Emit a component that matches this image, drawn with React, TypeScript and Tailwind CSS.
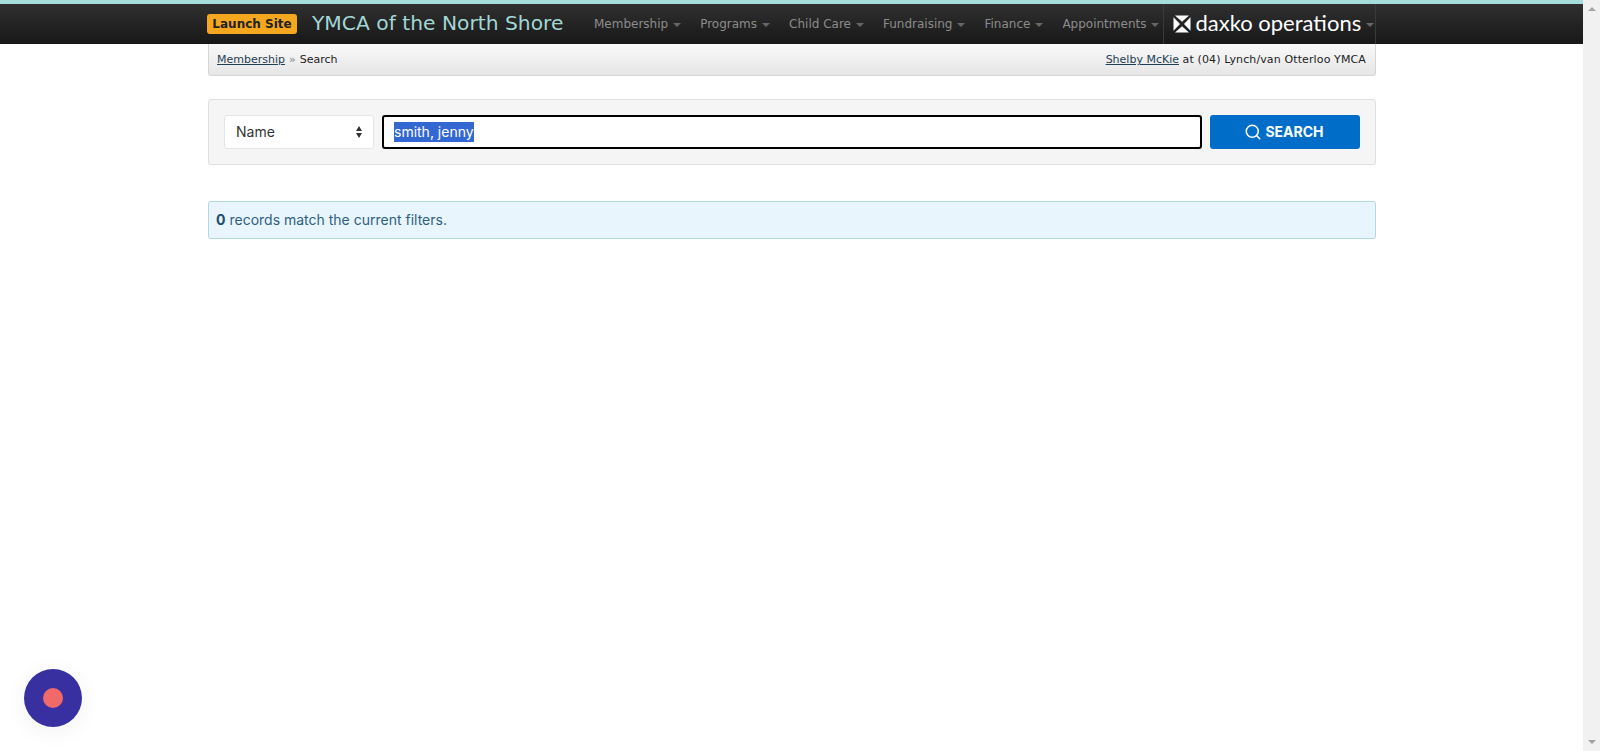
import { Search } from "lucide-react";

const navItems = ["Membership", "Programs", "Child Care", "Fundraising", "Finance", "Appointments"];

function Caret() {
  return <span className="ml-[5px] mt-[2px] h-0 w-0 border-x-[4px] border-t-[4px] border-x-transparent border-t-[#666666]" />;
}

function DaxkoMark() {
  return (
    <svg width="18" height="18" viewBox="0 0 18 18" className="shrink-0">
      <path fill="#fff" d="M2 .5h14L9 6.8zM.5 2.2 7 9 .5 15.8zM17.5 2.2V15.8L11 9zM2 17.5 9 11.2 16 17.5z" />
    </svg>
  );
}

export default function App() {
  return (
    <div className="flex h-[751px] w-full overflow-hidden bg-white font-['Inter',sans-serif]">
      <div className="min-w-0 flex-1">
        <div className="h-[4px] bg-[#a5dcdc]" />
        <header className="h-[40px] bg-gradient-to-b from-[#303030] to-[#181818] font-['DejaVu_Sans',sans-serif]">
          <div className="ml-[207px] flex h-full w-[1169px] items-center">
            <a className="flex h-[20px] w-[90px] items-center justify-center rounded-[3px] bg-[#f5a81f] pb-[1px] text-[12px] font-bold text-[#222222]">
              Launch Site
            </a>
            <span className="ml-[15px] w-[282px] shrink-0 whitespace-nowrap pb-[2px] text-[20.25px] leading-none text-[#a2d8d4]">YMCA of the North Shore</span>
            <nav className="flex h-full items-center">
              {navItems.map((item) => (
                <a key={item} className="flex items-center pr-[19px] text-[12px] text-[#8c8c8c] last:pr-[4px]">
                  {item}
                  <Caret />
                </a>
              ))}
            </nav>
            <div className="flex h-full flex-1 items-center border-x border-[#3a3a3a] pl-[9px]">
              <DaxkoMark />
              <span className="ml-[4px] whitespace-nowrap pb-[2px] font-['Lato',sans-serif] text-[22px] font-normal leading-none text-white">daxko operations</span>
              <span className="flex">
                <Caret />
              </span>
            </div>
          </div>
        </header>

        <main className="ml-[208px] w-[1168px]">
          <div className="flex h-[32px] items-center justify-between rounded-b-[3px] border-x border-b border-[#d6d6d6] bg-gradient-to-b from-[#f9f9f9] to-[#e6e6e6] px-[8px] pr-[9px] pt-[2px] font-['DejaVu_Sans',sans-serif] text-[11px] text-[#222222]">
            <div className="flex items-center">
              <a className="text-[#1f3f55] underline">Membership</a>
              <span className="mx-[4px] text-[#888888]">»</span>
              <span>Search</span>
            </div>
            <div>
              <a className="text-[#1f3f55] underline">Shelby McKie</a>
              <span className="tracking-[0.12px]"> at (04) Lynch/van Otterloo YMCA</span>
            </div>
          </div>

          <section className="mt-[23px] flex h-[66px] items-center gap-[8px] rounded-[3px] border border-[#e0e0e0] bg-[#f5f5f5] px-[15px]">
            <div className="flex h-[34px] w-[150px] items-center justify-between rounded-[3px] border border-[#e6e6e6] bg-white pb-[1px] pl-[11px] pr-[11px] text-[14px] text-[#333333]">
              Name
              <span className="flex flex-col gap-[2px]">
                <span className="h-0 w-0 border-x-[3.5px] border-b-[5px] border-x-transparent border-b-[#333333]" />
                <span className="h-0 w-0 border-x-[3.5px] border-t-[5px] border-x-transparent border-t-[#333333]" />
              </span>
            </div>
            <div className="flex h-[34px] flex-1 items-center rounded-[3px] border-2 border-black bg-white px-[10px] pb-[1px] text-[14px]">
              <span className="bg-[#3367d1] leading-[20px] text-white">smith, jenny</span>
            </div>
            <button className="flex h-[34px] w-[150px] items-center justify-center gap-[3px] rounded-[3px] bg-[#006ec8] pb-[1px] pr-[2px] text-[14px] font-bold text-white">
              <Search size={18} strokeWidth={2} />
              SEARCH
            </button>
          </section>

          <div className="mt-[36px] flex h-[38px] items-center rounded-[3px] border border-[#b2d7e8] bg-[#e8f5fd] px-[7px] pb-[1px] text-[14px] text-[#2f5f7f]">
            <strong className="mr-[4px] font-bold text-[#1f4f6f]">0</strong> records match the current filters.
          </div>
        </main>
      </div>

      <aside className="flex w-[17px] shrink-0 flex-col items-center justify-between bg-[#f1f1f1] py-[7px]">
        <span className="h-0 w-0 border-x-[4px] border-b-[4px] border-x-transparent border-b-[#a3a3a3]" />
        <span className="h-0 w-0 border-x-[4px] border-t-[4px] border-x-transparent border-t-[#a3a3a3]" />
      </aside>

      <button className="fixed bottom-[24px] left-[24px] flex h-[58px] w-[58px] items-center justify-center rounded-full bg-[#3830a0] shadow-[0_4px_24px_rgba(0,0,0,0.06)]">
        <span className="h-[20px] w-[20px] rounded-full bg-[#f06a6a]" />
      </button>
    </div>
  );
}
